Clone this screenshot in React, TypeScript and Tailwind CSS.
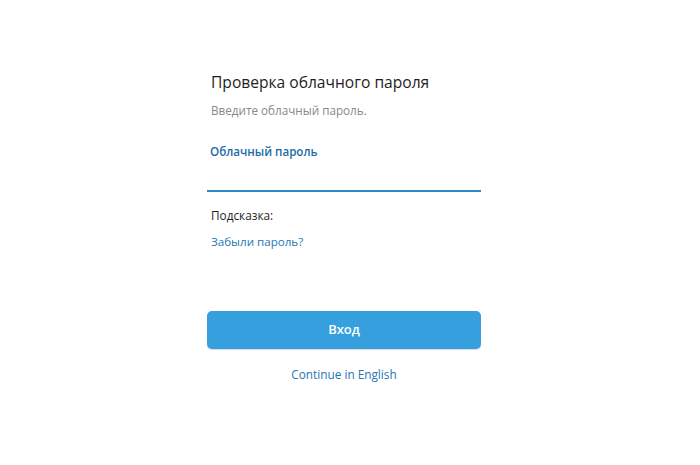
import React from "react";

export default function App() {
  return (
    <div className="w-[700px] h-[465px] bg-white" style={{ fontFamily: '"Open Sans", "Noto Sans", sans-serif' }}>
      <div className="ml-[207px] w-[274px] pt-[71px] flex flex-col">
        <div className="px-[4px] text-[15.6px] leading-[22px] text-[#1e1e1e]">Проверка облачного пароля</div>
        <div className="px-[4px] mt-[8px] text-[11.7px] leading-[18px] text-[#888888]">Введите облачный пароль.</div>
        <div className="px-[3px] mt-[24px] text-[11.6px] leading-[18px] font-semibold text-[#1b6ca7]">Облачный пароль</div>
        <div className="mt-[29px] h-[2px] bg-[#2a8bc6]" />
        <div className="px-[4px] mt-[14px] text-[11.8px] leading-[18px] text-[#1e1e1e]">Подсказка:</div>
        <div className="px-[4px] mt-[9px] text-[11.6px] leading-[18px] text-[#2577b4]">Забыли пароль?</div>
        <button className="mt-[60px] h-[38px] rounded-[5px] bg-[#35a0dd] text-white text-[13px] font-semibold shadow-[0_1px_1px_rgba(0,0,0,0.15)]">Вход</button>
        <div className="mt-[16px] text-center text-[11.8px] leading-[18px] text-[#2577b4]">Continue in English</div>
      </div>
    </div>
  );
}
